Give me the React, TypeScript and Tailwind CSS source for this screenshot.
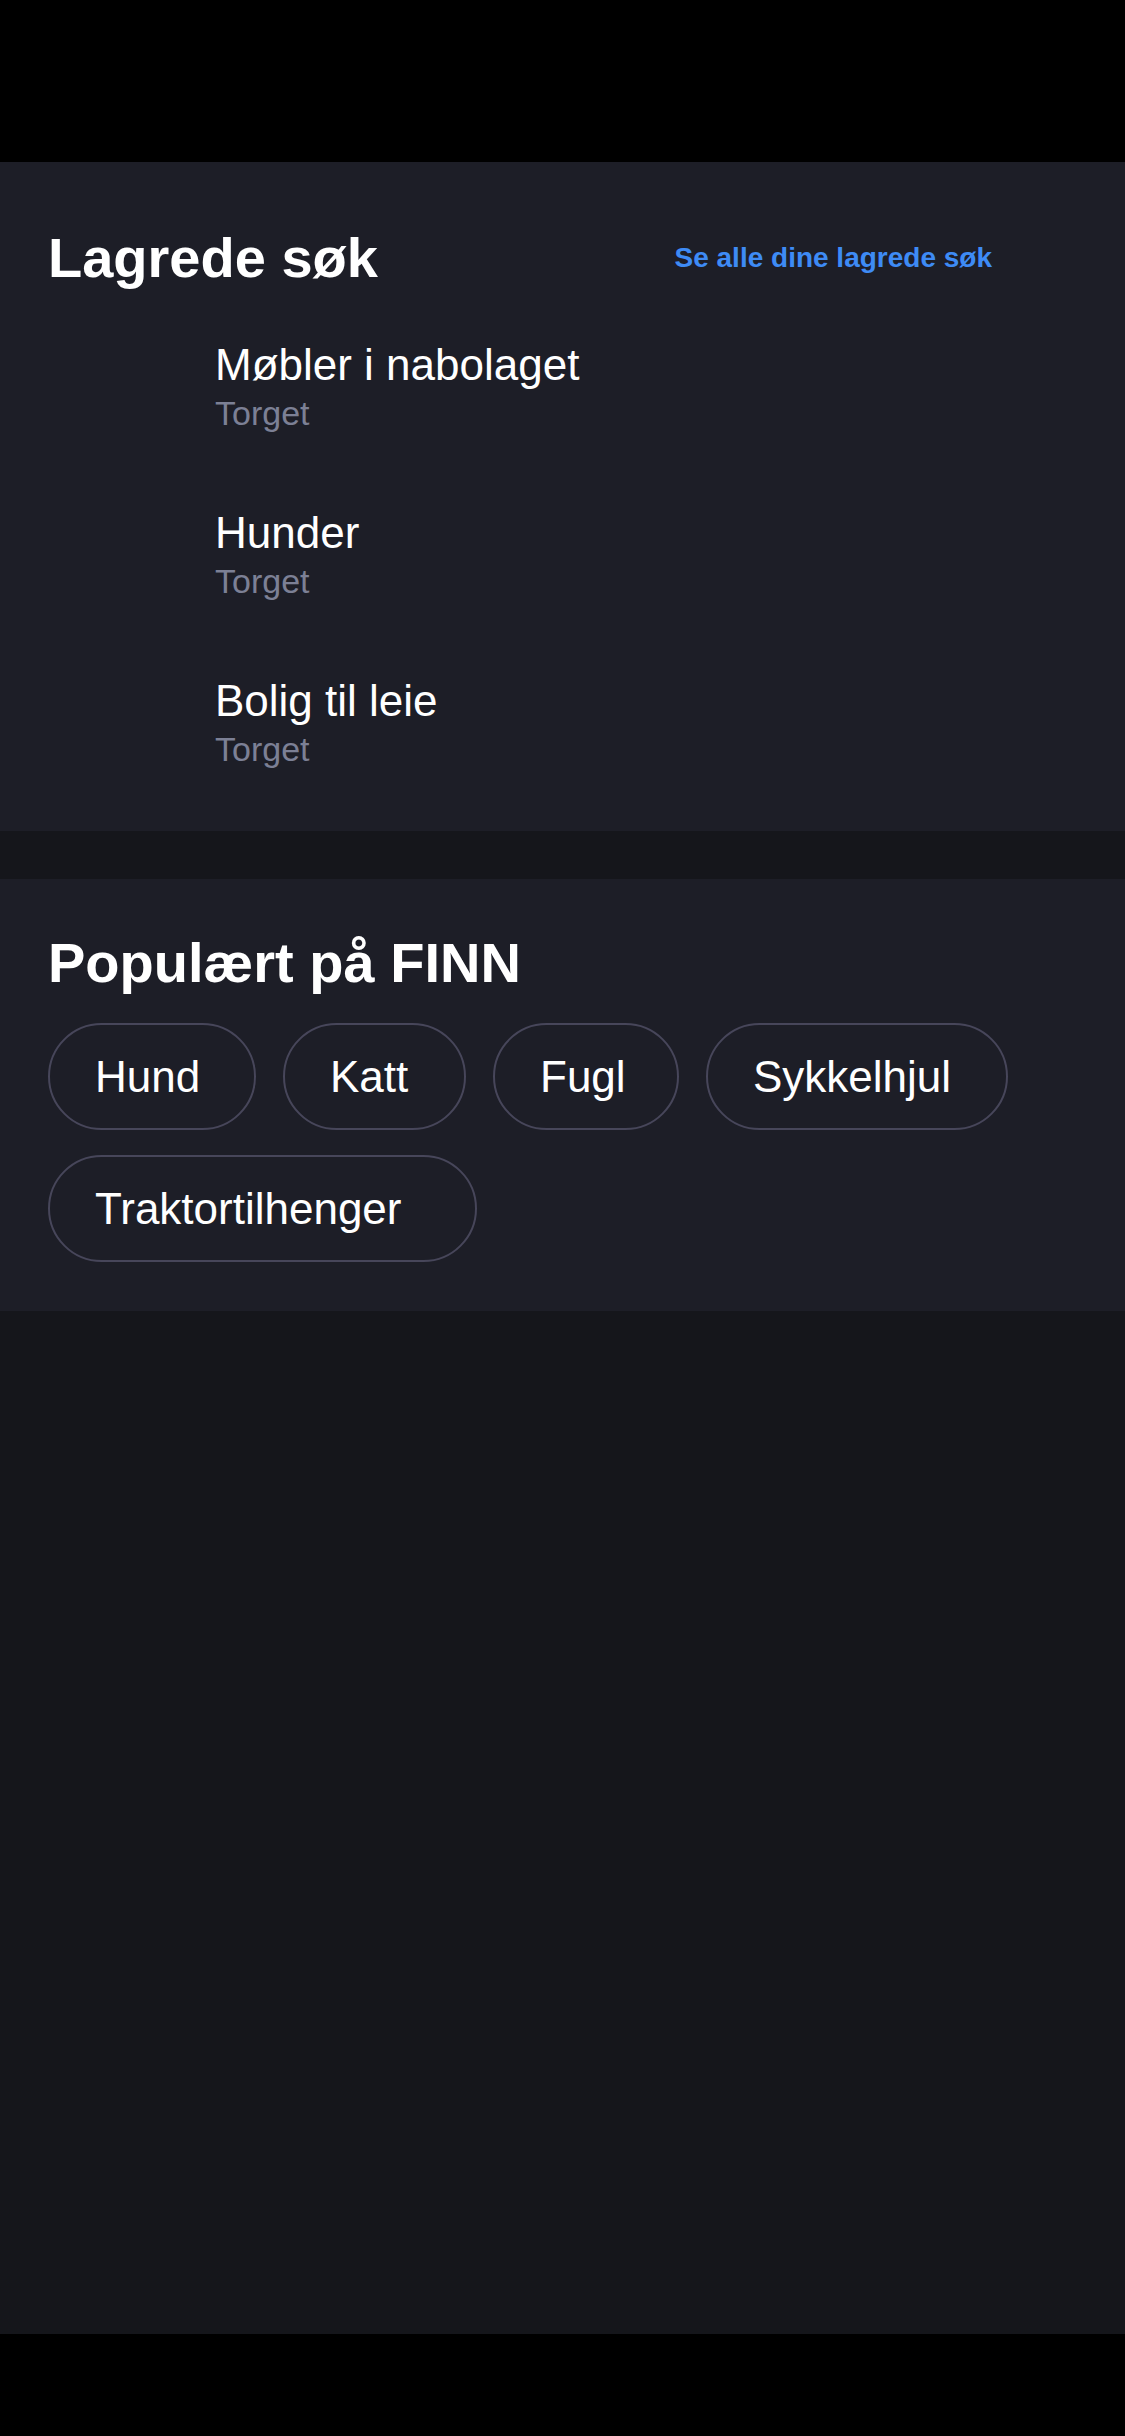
import React from "react";

const saved = [
  { title: "Møbler i nabolaget", sub: "Torget" },
  { title: "Hunder", sub: "Torget" },
  { title: "Bolig til leie", sub: "Torget" },
];

const chips = [
  { label: "Hund", w: "w-[208px]" },
  { label: "Katt", w: "w-[183px]" },
  { label: "Fugl", w: "w-[186px]" },
  { label: "Sykkelhjul", w: "w-[302px]" },
  { label: "Traktortilhenger", w: "w-[429px]" },
];

export default function App() {
  return (
    <div
      className="flex h-[2436px] w-[1125px] flex-col bg-[#15161b] text-white"
      style={{ fontFamily: '"Liberation Sans", Arial, sans-serif' }}
    >
      <div className="h-[162px] shrink-0 bg-black" />

      <section className="bg-[#1d1e27] pt-[64px] pb-[25px]">
        <div className="flex items-center justify-between pl-[48px] pr-[133px]">
          <h2 className="text-[56px] leading-[64px] font-bold">Lagrede søk</h2>
          <a className="text-[28px] leading-[32px] font-bold text-[#3e8bf5]">
            Se alle dine lagrede søk
          </a>
        </div>
        <ul className="mt-[12px]">
          {saved.map((s) => (
            <li key={s.title} className="pl-[215px] pt-[36px] pb-[37px]">
              <div className="text-[44px] leading-[54px]">{s.title}</div>
              <div className="mt-[1px] text-[34px] leading-[40px] text-[#7c8095]">
                {s.sub}
              </div>
            </li>
          ))}
        </ul>
      </section>

      <div className="h-[48px] shrink-0" />

      <section className="bg-[#1d1e27] px-[48px] pt-[52px] pb-[49px]">
        <h2 className="text-[56px] leading-[64px] font-bold">Populært på FINN</h2>
        <div className="mt-[28px] flex flex-wrap gap-x-[27px] gap-y-[25px]">
          {chips.map((c) => (
            <button
              key={c.label}
              className={`${c.w} flex h-[107px] items-center rounded-full border-2 border-[#47465a] pl-[45px] text-left text-[44px] leading-[52px] text-white`}
            >
              {c.label}
            </button>
          ))}
        </div>
      </section>

      <div className="flex-1" />
      <div className="h-[102px] shrink-0 bg-black" />
    </div>
  );
}
